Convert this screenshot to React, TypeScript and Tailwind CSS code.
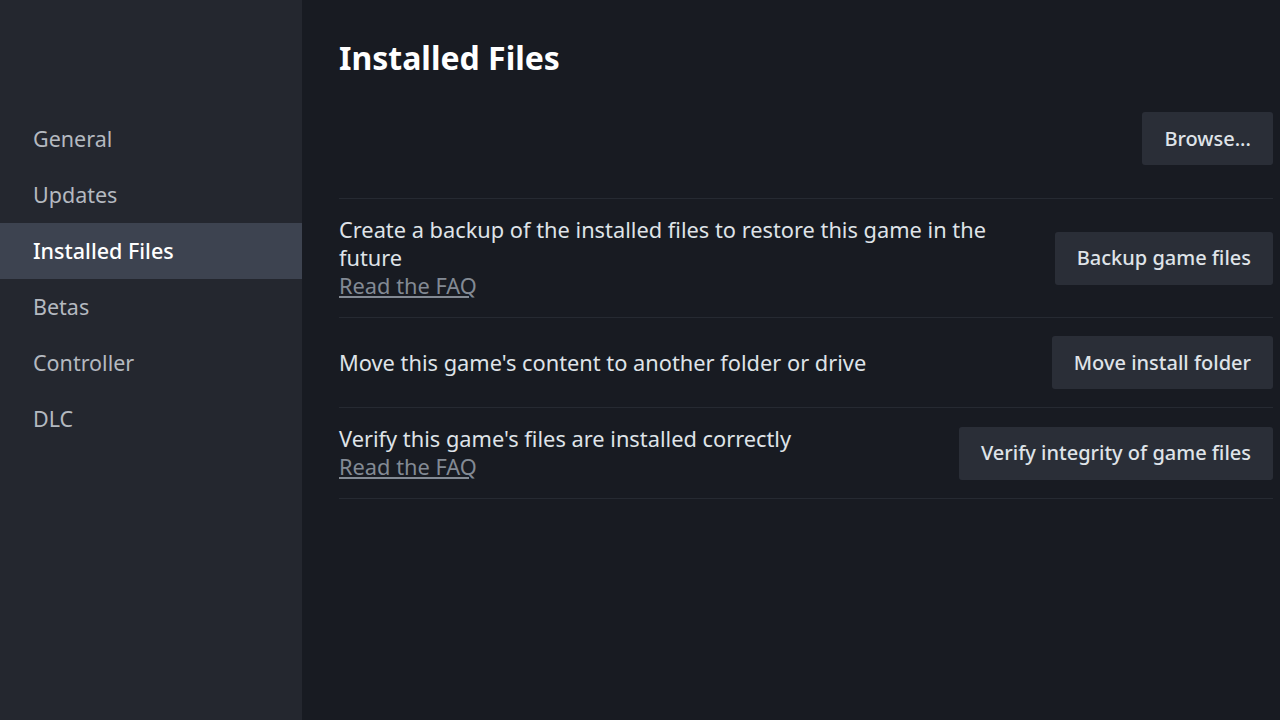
import { useState } from "react";

const navItems = ["General", "Updates", "Installed Files", "Betas", "Controller", "DLC"];

function ActionButton({ children }: { children: React.ReactNode }) {
  return (
    <button className="h-[53px] shrink-0 rounded-[3px] bg-[#2a2e37] px-[22px] text-[20px] font-medium text-[#dfe3e8] hover:bg-[#353a45]">
      {children}
    </button>
  );
}

export default function App() {
  const [active, setActive] = useState("Installed Files");

  return (
    <div
      className="flex h-[720px] w-[1280px] overflow-hidden bg-[#181b22] text-[#dfe3e8]"
      style={{ fontFamily: '"Noto Sans", "Open Sans", sans-serif' }}
    >
      {/* sidebar */}
      <aside className="w-[302px] shrink-0 bg-[#24272f] pt-[111px]">
        <ul>
          {navItems.map((item) => (
            <li key={item}>
              <button
                onClick={() => setActive(item)}
                className={
                  item === active
                    ? "flex h-[56px] w-full items-center bg-[#3d4350] pl-[33px] text-left text-[21.5px] font-medium text-white"
                    : "flex h-[56px] w-full items-center pl-[33px] text-left text-[21.5px] text-[#b4b9c0] hover:text-white"
                }
              >
                {item}
              </button>
            </li>
          ))}
        </ul>
      </aside>

      {/* content */}
      <main className="flex-1 pl-[37px] pr-[7px] pt-[38px]">
        <h1 className="text-[32px] font-bold leading-[40px] text-white">Installed Files</h1>

        <div className="flex justify-end pb-[33px] pt-[34px]">
          <ActionButton>Browse...</ActionButton>
        </div>

        <div className="flex items-center justify-between gap-8 border-t border-[#262a32] py-[17px]">
          <div className="text-[21.8px] leading-[28px] text-[#dfe3e8]">
            <p className="max-w-[670px]">Create a backup of the installed files to restore this game in the future</p>
            <a href="#" className="text-[#838a94] underline underline-offset-2">
              Read the FAQ
            </a>
          </div>
          <ActionButton>Backup game files</ActionButton>
        </div>

        <div className="flex items-center justify-between gap-8 border-t border-[#262a32] py-[18px]">
          <p className="text-[21.8px] leading-[28px] text-[#dfe3e8]">Move this game's content to another folder or drive</p>
          <ActionButton>Move install folder</ActionButton>
        </div>

        <div className="flex items-center justify-between gap-8 border-y border-[#262a32] py-[17px]">
          <div className="text-[21.8px] leading-[28px] text-[#dfe3e8]">
            <p>Verify this game's files are installed correctly</p>
            <a href="#" className="text-[#838a94] underline underline-offset-2">
              Read the FAQ
            </a>
          </div>
          <ActionButton>Verify integrity of game files</ActionButton>
        </div>
      </main>
    </div>
  );
}
